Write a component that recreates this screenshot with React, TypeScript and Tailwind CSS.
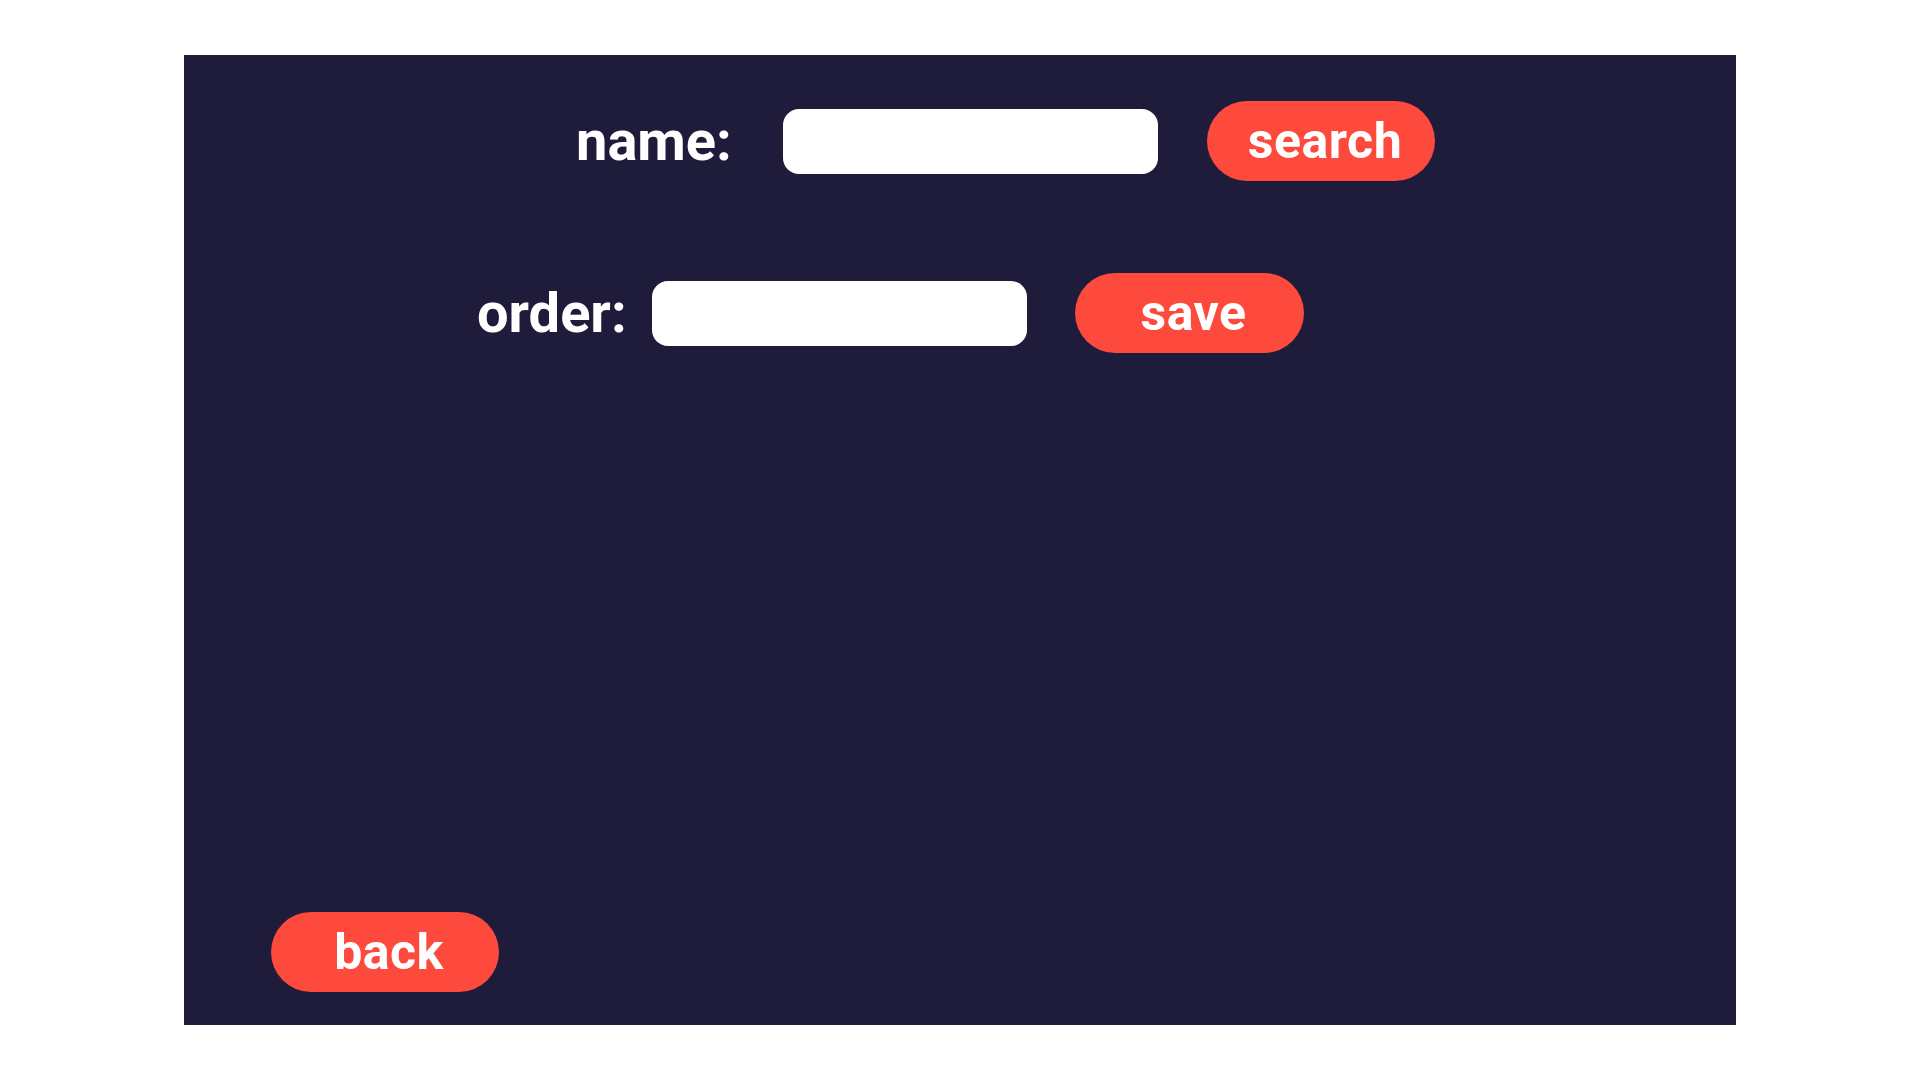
import React from "react";

function Pill({ label, className }: { label: string; className?: string }) {
    return (
        <button
            className={`flex items-center justify-center rounded-full bg-[#fd4a3d] pl-[8px] text-[50px] font-bold tracking-[0.5px] text-white leading-none ${className ?? ""}`}
        >
            <span className="-mt-[1px]">{label}</span>
        </button>
    );
}

function Field({ width }: { width: string }) {
    return (
        <input
            className={`h-[65px] ${width} rounded-[16px] bg-white outline-none`}
        />
    );
}

export default function App() {
    return (
        <div className="min-h-screen bg-white font-['Roboto',sans-serif]">
            <div className="h-[55px]" />
            <div className="ml-[184px] flex h-[970px] w-[1552px] flex-col bg-[#1e1c3a] pt-[46px]">
                {/* name row */}
                <div className="ml-[392px] flex h-[80px] items-center">
                    <label className="w-[207px] text-[56px] font-bold leading-none text-white">
                        name:
                    </label>
                    <Field width="w-[375px]" />
                    <Pill label="search" className="ml-[49px] h-[80px] w-[228px]" />
                </div>

                {/* order row */}
                <div className="ml-[293px] mt-[92px] flex h-[80px] items-center">
                    <label className="w-[175px] text-[56px] font-bold leading-none text-white">
                        order:
                    </label>
                    <Field width="w-[375px]" />
                    <Pill label="save" className="ml-[48px] h-[80px] w-[229px]" />
                </div>

                <div className="mt-auto mb-[33px] ml-[87px]">
                    <Pill label="back" className="h-[80px] w-[228px]" />
                </div>
            </div>
        </div>
    );
}
